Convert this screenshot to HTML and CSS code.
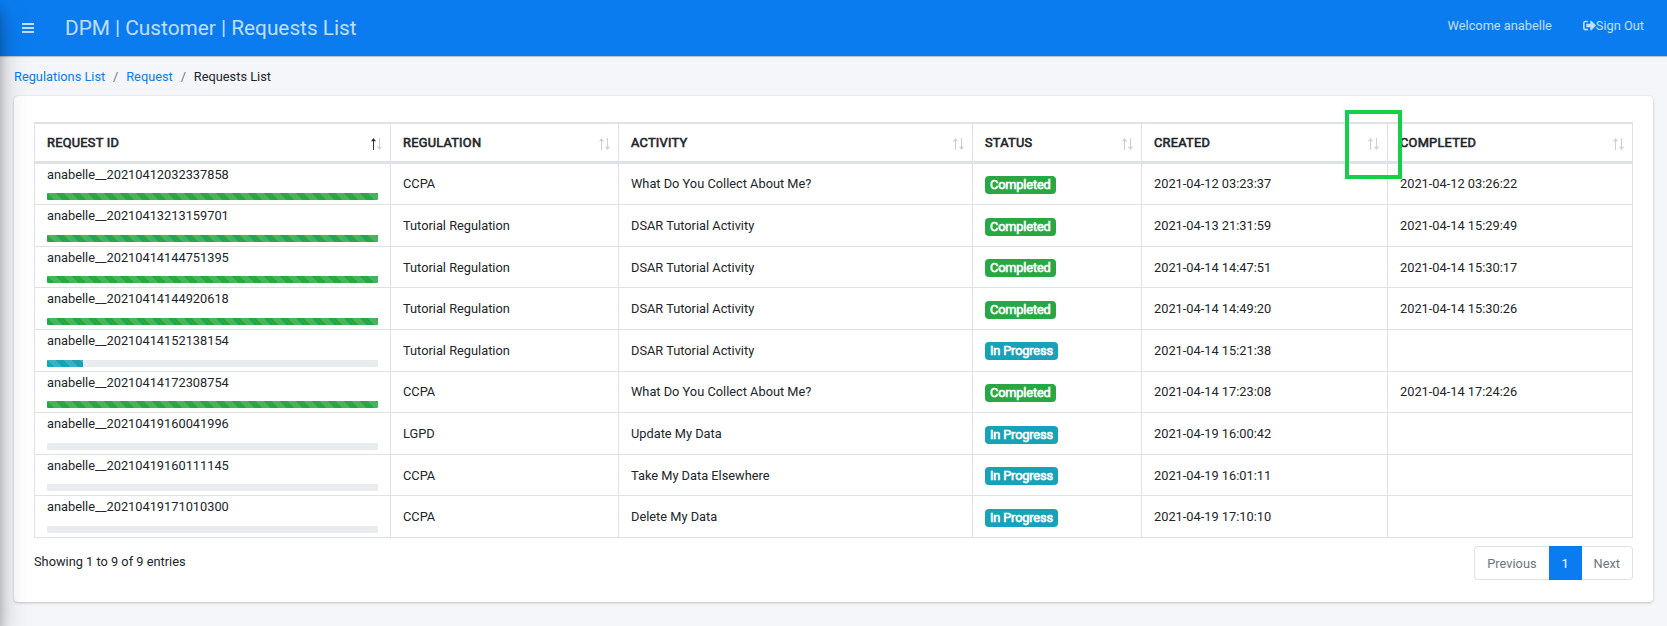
FILE: index.html
```html
<!DOCTYPE html>
<html lang="en">
<head>
<meta charset="utf-8">
<title>DPM | Customer | Requests List</title>
<link rel="stylesheet" href="styles.css">
</head>
<body>
<svg class="symbols" width="0" height="0">
  <symbol id="arrow-up" viewBox="0 0 5 12"><path d="M2 1h1v11H2z"/><path d="M2.500 0L5 3.200H0z"/></symbol>
  <symbol id="arrow-down" viewBox="0 0 5 12"><path d="M2 0h1v11H2z"/><path d="M2.500 12L5 8.800H0z"/></symbol>
</svg>
<aside class="sidebar"></aside>
<header class="navbar">
  <svg class="menu-icon" viewBox="0 0 12 10" width="12" height="10"><path d="M0 0h12v2H0zM0 4h12v2H0zM0 8h12v2H0z"/></svg>
  <h1 class="brand">DPM | Customer | Requests List</h1>
  <span class="welcome">Welcome anabelle</span>
  <a class="signout"><svg class="signout-icon" viewBox="0 0 512 512" width="13" height="13"><path d="M497 273L329 441c-15 15-41 4.500-41-17v-96H152c-13.300 0-24-10.700-24-24v-96c0-13.300 10.700-24 24-24h136V88c0-21.400 25.900-32 41-17l168 168c9.300 9.400 9.300 24.600 0 34zM192 436v-40c0-6.600-5.400-12-12-12H96c-17.700 0-32-14.300-32-32V160c0-17.700 14.300-32 32-32h84c6.600 0 12-5.400 12-12V76c0-6.600-5.400-12-12-12H96c-53 0-96 43-96 96v192c0 53 43 96 96 96h84c6.600 0 12-5.400 12-12z"/></svg><span>Sign Out</span></a>
</header>
<main class="content">
  <nav class="breadcrumb"><a>Regulations List</a><span class="slash">/</span><a>Request</a><span class="slash">/</span><span>Requests List</span></nav>
  <section class="card">
    <table class="requests">
      <colgroup><col class="c-id"><col class="c-reg"><col class="c-act"><col class="c-status"><col class="c-created"><col class="c-completed"></colgroup>
      <thead>
        <tr>
          <th><div class="head"><span>REQUEST ID</span><span class="sort asc"><svg><use href="#arrow-up"/></svg><svg><use href="#arrow-down"/></svg></span></div></th>
          <th><div class="head"><span>REGULATION</span><span class="sort"><svg><use href="#arrow-up"/></svg><svg><use href="#arrow-down"/></svg></span></div></th>
          <th><div class="head"><span>ACTIVITY</span><span class="sort"><svg><use href="#arrow-up"/></svg><svg><use href="#arrow-down"/></svg></span></div></th>
          <th><div class="head"><span>STATUS</span><span class="sort"><svg><use href="#arrow-up"/></svg><svg><use href="#arrow-down"/></svg></span></div></th>
          <th class="marked"><div class="head"><span>CREATED</span><span class="sort"><svg><use href="#arrow-up"/></svg><svg><use href="#arrow-down"/></svg></span></div><div class="marker"></div></th>
          <th><div class="head"><span>COMPLETED</span><span class="sort"><svg><use href="#arrow-up"/></svg><svg><use href="#arrow-down"/></svg></span></div></th>
        </tr>
      </thead>
      <tbody>
        <tr class="short raised"><td class="id">anabelle__20210412032337858<div class="progress"><div class="bar done"></div></div></td><td>CCPA</td><td>What Do You Collect About Me?</td><td class="status"><span class="badge done">Completed</span></td><td>2021-04-12 03:23:37</td><td>2021-04-12 03:26:22</td></tr>
        <tr><td class="id">anabelle__20210413213159701<div class="progress"><div class="bar done"></div></div></td><td>Tutorial Regulation</td><td>DSAR Tutorial Activity</td><td class="status low"><span class="badge done">Completed</span></td><td>2021-04-13 21:31:59</td><td>2021-04-14 15:29:49</td></tr>
        <tr class="short"><td class="id">anabelle__20210414144751395<div class="progress"><div class="bar done"></div></div></td><td>Tutorial Regulation</td><td>DSAR Tutorial Activity</td><td class="status"><span class="badge done">Completed</span></td><td>2021-04-14 14:47:51</td><td>2021-04-14 15:30:17</td></tr>
        <tr><td class="id">anabelle__20210414144920618<div class="progress"><div class="bar done"></div></div></td><td>Tutorial Regulation</td><td>DSAR Tutorial Activity</td><td class="status low"><span class="badge done">Completed</span></td><td>2021-04-14 14:49:20</td><td>2021-04-14 15:30:26</td></tr>
        <tr><td class="id">anabelle__20210414152138154<div class="progress"><div class="bar active" style="width:36px"></div></div></td><td>Tutorial Regulation</td><td>DSAR Tutorial Activity</td><td class="status"><span class="badge active">In Progress</span></td><td>2021-04-14 15:21:38</td><td></td></tr>
        <tr class="short raised"><td class="id">anabelle__20210414172308754<div class="progress"><div class="bar done"></div></div></td><td>CCPA</td><td>What Do You Collect About Me?</td><td class="status"><span class="badge done">Completed</span></td><td>2021-04-14 17:23:08</td><td>2021-04-14 17:24:26</td></tr>
        <tr><td class="id">anabelle__20210419160041996<div class="progress"></div></td><td>LGPD</td><td>Update My Data</td><td class="status low"><span class="badge active">In Progress</span></td><td>2021-04-19 16:00:42</td><td></td></tr>
        <tr class="short"><td class="id">anabelle__20210419160111145<div class="progress"></div></td><td>CCPA</td><td>Take My Data Elsewhere</td><td class="status"><span class="badge active">In Progress</span></td><td>2021-04-19 16:01:11</td><td></td></tr>
        <tr><td class="id">anabelle__20210419171010300<div class="progress"></div></td><td>CCPA</td><td>Delete My Data</td><td class="status low"><span class="badge active">In Progress</span></td><td>2021-04-19 17:10:10</td><td></td></tr>
      </tbody>
    </table>
    <div class="footer">
      <span class="info">Showing 1 to 9 of 9 entries</span>
      <div class="pagination"><a class="page prev">Previous</a><a class="page current">1</a><a class="page next">Next</a></div>
    </div>
  </section>
</main>
</body>
</html>
```
FILE: styles.css
```css
* { box-sizing: border-box; }
body {
  margin: 0;
  height: 626px;
  overflow: hidden;
  background: #f4f6f9;
  color: #212529;
  font: 12.8px/20px Roboto, "Liberation Sans", sans-serif;
}
.symbols { position: absolute; }
.sidebar {
  position: absolute;
  z-index: 5;
  left: -250px;
  top: 0;
  width: 250px;
  height: 626px;
  box-shadow: 0 14px 28px rgba(0,0,0,.25), 0 10px 10px rgba(0,0,0,.22);
}
.navbar {
  display: flex;
  align-items: center;
  height: 56px;
  padding: 0 23px 0 22px;
  background: #0b7cf0;
  color: rgba(255,255,255,.75);
  box-shadow: 0 1px 1px rgba(0,0,0,.2);
}
.menu-icon { fill: currentColor; }
.brand { margin: 0 auto 0 31px; font-size: 20.8px; font-weight: 400; line-height: 30px; }
.welcome, .signout { padding-bottom: 5px; }
.signout { display: flex; align-items: center; margin-left: 31px; }
.signout-icon { fill: currentColor; }
.content { padding: 0 14px; }
.breadcrumb { display: flex; height: 40px; padding-top: 11px; color: #212529; }
.breadcrumb a { color: #0b7cf0; }
.slash { width: 21px; text-align: center; color: #6c757d; }
.card {
  height: 506px;
  padding: 26px 20px 0;
  background: #fff;
  border-radius: 4px;
  box-shadow: 0 0 1px rgba(0,0,0,.13), 0 1px 3px rgba(0,0,0,.2);
}
.requests {
  width: 1599px;
  table-layout: fixed;
  border-collapse: separate;
  border-spacing: 0;
  border-left: 1px solid #dee2e6;
}
.c-id { width: 356px; }
.c-reg { width: 228px; }
.c-act { width: 354px; }
.c-status { width: 169px; }
.c-created { width: 246px; }
.c-completed { width: 245px; }
th, td { border-right: 1px solid #dee2e6; text-align: left; vertical-align: top; }
th {
  height: 42px;
  padding: 0 8px 0 12px;
  border-top: 2px solid #dee2e6;
  border-bottom: 3px solid #dee2e6;
  font-weight: 400;
}
.head {
  display: flex;
  justify-content: space-between;
  align-items: center;
  height: 37px;
  letter-spacing: .25px;
  -webkit-text-stroke: .6px #212529;
}
.sort { display: flex; gap: 1px; padding-top: 2px; }
.sort svg { width: 5px; height: 12px; fill: #cdced6; stroke: none; }
.sort.asc svg:first-child { fill: #30343a; }
.marked { position: relative; }
.marker { position: absolute; left: 203px; top: -14px; width: 57px; height: 69px; border: 4px solid #14d046; }
tbody td { height: 42px; padding: 11px 12px 0; border-bottom: 1px solid #dee2e6; }
tbody .short td { height: 41px; }
tbody .raised td { padding-top: 10px; }
tbody td.id { padding-top: 1px; vertical-align: bottom; }
tbody .short td.id { padding-top: 1px; }
.progress { height: 7px; margin: 8px 0 4px; background: #e9ecef; border-radius: 1px; overflow: hidden; }
tr:not(.short) .progress { margin-top: 9px; }
.bar {
  height: 7px;
  background-image: linear-gradient(45deg, rgba(255,255,255,.15) 25%, transparent 25%, transparent 50%, rgba(255,255,255,.15) 50%, rgba(255,255,255,.15) 75%, transparent 75%);
  background-size: 16px 16px;
}
.done { background-color: #28a745; }
.active { background-color: #17a2b8; }
tbody td.status { padding-top: 12px; }
tbody td.low { padding-top: 13px; }
.badge {
  display: block;
  width: max-content;
  height: 18px;
  padding: 0 5px;
  border-radius: 4px;
  color: #fff;
  letter-spacing: -.17px;
  line-height: 18px;
  -webkit-text-stroke: .6px #fff;
}
.footer { display: flex; justify-content: space-between; }
.info { padding-top: 14px; }
.pagination { display: flex; height: 34px; margin-top: 8px; }
.page { padding: 1px 12px 0; border: 1px solid #dee2e6; color: #6c757d; line-height: 32px; }
.prev { border-right: 0; border-radius: 4px 0 0 4px; }
.next { border-left: 0; border-radius: 0 4px 4px 0; }
.current { width: 33px; background: #0b7cf0; border-color: #0b7cf0; color: #fff; text-align: center; }
```
